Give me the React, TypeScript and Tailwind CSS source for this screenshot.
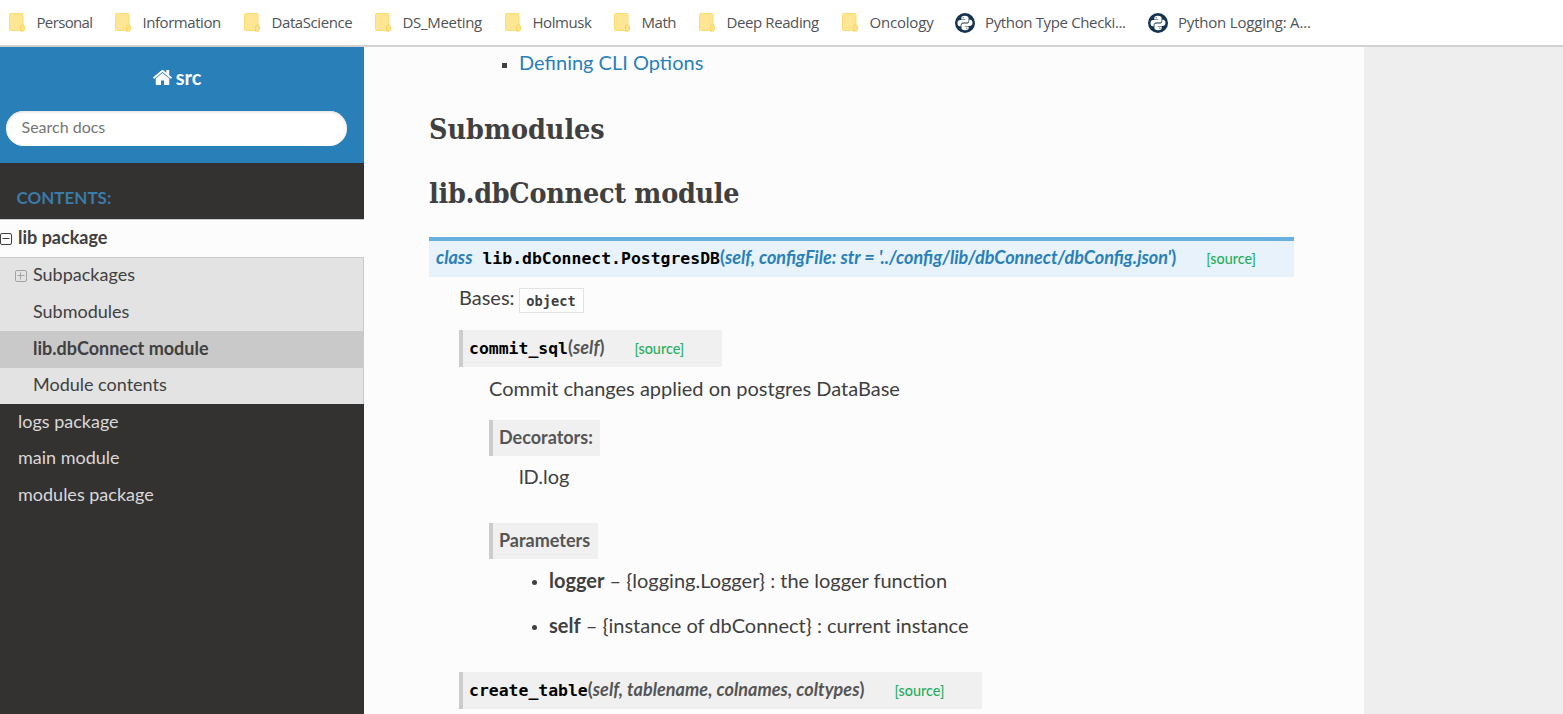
import type { ReactNode } from "react";
import clsx from "clsx";

function FolderIcon() {
  return (
    <svg viewBox="0 0 16 19" className="h-[19px] w-4 shrink-0">
      <rect x="0.5" y="0.5" width="13.500" height="17" rx="1" fill="#ffe694" stroke="#fbdc6c" />
      <path d="M11.500 18.200V13.500q0-1.500 2-1.500t2 1.500v3q0 1.700-2 1.700z" fill="#fce28a" stroke="#f6d057" strokeWidth="0.8" />
    </svg>
  );
}

function PythonIcon() {
  return (
    <svg viewBox="0 0 20 20" className="size-5 shrink-0">
      <circle cx="10" cy="10" r="10" fill="#17344f" />
      <path d="M9.800 2.700c-2.900 0-3.500 1.200-3.500 2.500v1.300h3.900v.6H5c-1.600 0-2.500 1.300-2.500 3.100s.9 3.100 2.100 3.100h1.300v-1.500c0-1.300 1.100-2.400 2.400-2.400h3.300c1.100 0 2-.9 2-2V5.200c0-1.500-1.100-2.500-3.800-2.500z" fill="#ffffff" />
      <path d="M10.200 17.300c2.900 0 3.500-1.200 3.500-2.500v-1.300H9.800v-.6H15c1.600 0 2.500-1.300 2.500-3.100s-.9-3.100-2.100-3.100h-1.300v1.500c0 1.300-1.100 2.400-2.400 2.400H8.400c-1.100 0-2 .9-2 2v2.200c0 1.500 1.100 2.500 3.800 2.500z" fill="#ffffff" />
      <path d="M6 13.100v-1.300c0-1.300 1.100-2.200 2.400-2.200h3.300c1.400 0 2.300-1 2.300-2.300" fill="none" stroke="#8795a3" strokeWidth="0.9" />
      <circle cx="8.200" cy="4.700" r="0.700" fill="#71808f" />
      <circle cx="11.800" cy="15.300" r="0.700" fill="#71808f" />
    </svg>
  );
}

function HomeIcon() {
  return (
    <svg viewBox="0 0 1792 1792" fill="currentColor" className="size-[21px] shrink-0">
      <path d="M1472 992v480q0 26-19 45t-45 19h-384v-384h-256v384h-384q-26 0-45-19t-19-45v-480q0-1 .5-3t.5-3l575-474 575 474q1 2 1 6zm223-69l-62 74q-8 9-21 11h-3q-13 0-21-7l-692-577-692 577q-12 8-24 7-13-2-21-11l-62-74q-8-10-7-23.500t11-21.500l719-599q32-26 76-26t76 26l244 204v-195q0-14 9-23t23-9h192q14 0 23 9t9 23v408l219 182q10 8 11 21.500t-7 23.500z" />
    </svg>
  );
}

function ToggleIcon({ open }: { open?: boolean }) {
  return (
    <svg viewBox="0 0 12 12" fill="none" stroke="currentColor" className="size-3 shrink-0">
      <rect x="0.500" y="0.500" width="11" height="11" rx="1.500" />
      <path d={open ? "M2.500 5.500h7" : "M2.500 5.500h7M5.500 2.500v7"} />
    </svg>
  );
}

const bookmarks = [
  { label: "Personal", width: "w-[106px]", tracking: "tracking-[-0.65px]" },
  { label: "Information", width: "w-[129px]", tracking: "tracking-[-0.45px]" },
  { label: "DataScience", width: "w-[131px]", tracking: "tracking-[-0.42px]" },
  { label: "DS_Meeting", width: "w-[130px]", tracking: "tracking-[-0.31px]" },
  { label: "Holmusk", width: "w-[109px]", tracking: "tracking-[-0.45px]" },
  { label: "Math", width: "w-[85px]", tracking: "tracking-[-0.45px]" },
  { label: "Deep Reading", width: "w-[143px]", tracking: "tracking-[-0.4px]" },
  { label: "Oncology", width: "w-[113px]", tracking: "tracking-[-0.2px]" },
  { label: "Python Type Checki...", width: "w-[193px]", tracking: "tracking-[-0.36px]", python: true },
  { label: "Python Logging: A...", width: "w-[190px]", tracking: "tracking-[-0.2px]", python: true },
];

function BookmarkBar() {
  return (
    <nav className="flex h-[47px] shrink-0 items-center border-b-2 border-[#d2d2d2] bg-white pl-[9px] font-['Open_Sans',sans-serif] text-[15px] text-[#505357]">
      {bookmarks.map((b) => (
        <a key={b.label} className={clsx("flex shrink-0 items-center whitespace-nowrap", b.width, b.tracking)}>
          {b.python ? <PythonIcon /> : <FolderIcon />}
          <span className={b.python ? "ml-2.5" : "ml-[11.5px]"}>{b.label}</span>
        </a>
      ))}
    </nav>
  );
}

function Sidebar() {
  return (
    <aside className="flex w-[364px] shrink-0 flex-col bg-[#343131] text-[18px] leading-[34px]">
      <div className="flex h-[116px] flex-col bg-[#2980b9] pt-[14px] pl-1.5">
        <div className="flex h-8 w-[341px] items-center justify-center gap-[3px] text-[20px] font-bold text-[#fcfcfc]">
          <HomeIcon />
          <span>src</span>
        </div>
        <input
          placeholder="Search docs"
          className="mt-[18px] h-[35px] w-[341px] rounded-full bg-white px-[15.5px] pb-[5px] text-[16px] shadow-[inset_0_1px_3px_#dddddd] placeholder:text-[#757575]"
        />
      </div>
      <p className="mt-[17px] h-[39px] pl-[16.5px] text-[17px] leading-9 font-bold text-[#3a7ca8]">CONTENTS:</p>
      <div className="flex h-[38px] items-center gap-[5px] border-t border-[#c9c9c9] bg-[#fcfcfc] font-bold text-[#404040]">
        <ToggleIcon open />
        <span className="-mt-[3px] ml-px">lib package</span>
      </div>
      <div className="flex h-[147px] flex-col border-t border-r border-[#c9c9c9] bg-[#e3e3e3] text-[#404040]">
        <div className="flex h-[36px] items-center pl-[15px]">
          <span className="-mt-px text-[#a3a3a3]">
            <ToggleIcon />
          </span>
          <span className="-mt-[5px] ml-1.5">Subpackages</span>
        </div>
        <div className="h-[37px] pl-[33px]">Submodules</div>
        <div className="h-[37px] bg-[#c9c9c9] pl-[33px] leading-[35px] font-bold">lib.dbConnect module</div>
        <div className="h-[36px] pl-[33px] leading-8">Module contents</div>
      </div>
      <div className="-mt-px pl-[18px] text-[#d9d9d9]">
        <div className="h-9 leading-[36.5px]">logs package</div>
        <div className="h-[37px] leading-[36.5px]">main module</div>
        <div className="leading-[36.5px]">modules package</div>
      </div>
    </aside>
  );
}

function Name({ children }: { children: ReactNode }) {
  return <code className="font-['DejaVu_Sans_Mono',monospace] text-[16.45px] text-black">{children}</code>;
}

function Source() {
  return <a className="ml-[30px] text-[14.4px] font-medium text-[#27ae60] not-italic">[source]</a>;
}

function Method({ name, args, width }: { name: string; args: string; width: string }) {
  return (
    <div className={clsx("h-[37px] border-l-4 border-[#cccccc] bg-[#f0f0f0] pl-1.5 text-[18px] leading-[34px] font-bold whitespace-nowrap text-[#555555]", width)}>
      <Name>{name}</Name>
      <span>(</span>
      <em className="tracking-[0.05px]">{args}</em>
      <span>)</span>
      <Source />
    </div>
  );
}

function Field({ children, width }: { children: ReactNode; width: string }) {
  return (
    <div className={clsx("h-9 border-l-4 border-[#cccccc] bg-[#f0f0f0] pl-1.5 text-[18px] leading-[34px] font-bold text-[#555555]", width)}>
      {children}
    </div>
  );
}

function Param({ name, children }: { name: string; children: ReactNode }) {
  return (
    <li className="flex items-center leading-[30px]">
      <span className="mt-[5px] mr-3 size-[5px] rounded-full bg-[#404040]" />
      <span>
        <strong>{name}</strong> {children}
      </span>
    </li>
  );
}

function Content() {
  return (
    <main className="w-[1000px] shrink-0 bg-[#fcfcfc] pr-[70px] pl-[65px] text-[20px] leading-[30px] text-[#404040]">
      <div className="flex h-[30px] items-center pl-[73px] text-[#2980b9]">
        <span className="mt-1.5 mr-3 size-[5px] bg-[#404040]" />
        <a>Defining CLI Options</a>
      </div>
      <h2 className="mt-8 h-10 font-['Roboto_Slab','DejaVu_Serif_Condensed','DejaVu_Serif',serif] text-[28.4px] leading-10 font-bold">
        Submodules
      </h2>
      <h2 className="mt-6 h-10 font-['Roboto_Slab','DejaVu_Serif_Condensed','DejaVu_Serif',serif] text-[28.4px] leading-10 font-bold tracking-[-0.25px]">
        lib.dbConnect module
      </h2>
      <div className="mt-6 h-10 border-t-4 border-[#6ab0de] bg-[#e7f2fa] pl-[7px] text-[18px] leading-[33px] font-bold whitespace-nowrap text-[#2980b9]">
        <em className="mr-2.5">class</em>
        <Name>lib.dbConnect.PostgresDB</Name>
        <span>(</span>
        <em>self, configFile: str = '../config/lib/dbConnect/dbConfig.json'</em>
        <span>)</span>
        <Source />
      </div>
      <div className="pl-[30px]">
        <div className="mt-[5px] flex h-[30px] items-center">
          <span>Bases:</span>
          <code className="mt-[7px] ml-[4px] h-[25px] w-[65px] border border-[#e1e4e5] bg-white text-center font-['DejaVu_Sans_Mono',monospace] text-[13.7px] leading-6 font-bold">
            object
          </code>
        </div>
        <div className="mt-[18px]">
          <Method name="commit_sql" args="self" width="w-[263px]" />
        </div>
        <div className="pl-[30px]">
          <p className="mt-[6px]">Commit changes applied on postgres DataBase</p>
          <div className="mt-[17px]">
            <Field width="w-[111px]">Decorators:</Field>
          </div>
          <p className="mt-[5px] pl-[30px]">lD.log</p>
          <div className="mt-8">
            <Field width="w-[109px]">Parameters</Field>
          </div>
          <ul className="mt-[6px] flex flex-col gap-[15px] pl-[43px]">
            <Param name="logger">– {"{logging.Logger} : the logger function"}</Param>
            <Param name="self">– {"{instance of dbConnect} : current instance"}</Param>
          </ul>
        </div>
        <div className="mt-8">
          <Method name="create_table" args="self, tablename, colnames, coltypes" width="w-[523px]" />
        </div>
      </div>
    </main>
  );
}

export default function App() {
  return (
    <div className="flex h-[714px] w-[1563px] flex-col overflow-hidden bg-[#eeeeee] font-[Lato,sans-serif]">
      <BookmarkBar />
      <div className="flex min-h-0 flex-1">
        <Sidebar />
        <Content />
      </div>
    </div>
  );
}
